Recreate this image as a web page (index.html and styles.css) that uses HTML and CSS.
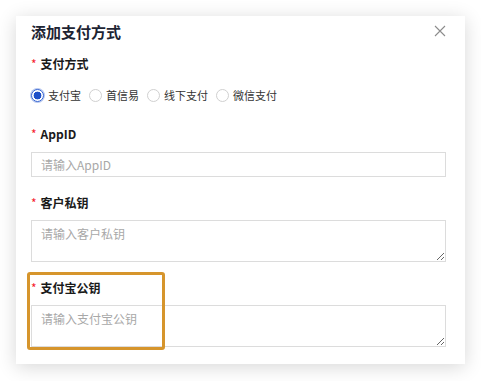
FILE: index.html
```html
<!DOCTYPE html>
<html lang="zh-CN">

<head>
    <meta charset="UTF-8">
    <meta name="viewport" content="width=device-width, initial-scale=1.0">
    <title>添加支付方式</title>
    <link rel="stylesheet" href="styles.css">
</head>

<body>
    <div class="dialog">
        <div class="dialog-header">
            <h2>添加支付方式</h2>
            <span class="close-btn">
                <svg width="12" height="12" viewBox="0 0 12 12">
                    <path d="M1 1 L11 11 M11 1 L1 11" stroke="#8c8c8c" stroke-width="1.1" fill="none" />
                </svg>
            </span>
        </div>

        <div class="form-item">
            <label class="form-label"><span class="required">*</span>支付方式</label>
            <div class="radio-group">
                <label class="radio"><input type="radio" name="pay" checked><span>支付宝</span></label>
                <label class="radio"><input type="radio" name="pay"><span>首信易</span></label>
                <label class="radio"><input type="radio" name="pay"><span>线下支付</span></label>
                <label class="radio"><input type="radio" name="pay"><span>微信支付</span></label>
            </div>
        </div>

        <div class="form-item">
            <label class="form-label"><span class="required">*</span>AppID</label>
            <input class="text-input" type="text" placeholder="请输入AppID">
        </div>

        <div class="form-item">
            <label class="form-label area-label"><span class="required">*</span>客户私钥</label>
            <textarea class="text-area" placeholder="请输入客户私钥"></textarea>
        </div>

        <div class="form-item highlight-item">
            <label class="form-label area-label"><span class="required">*</span>支付宝公钥</label>
            <textarea class="text-area" placeholder="请输入支付宝公钥"></textarea>
            <div class="highlight-box"></div>
        </div>
    </div>
</body>

</html>
```

FILE: styles.css
```css
body {
    margin: 0;
    min-height: 100vh;
    padding-top: 16px;
    box-sizing: border-box;
    background-color: #ffffff;
    font-family: 'Noto Sans CJK SC', 'Noto Sans', sans-serif;
    color: #222;
}

.dialog {
    margin-left: 16px;
    width: 449px;
    height: 348px;
    box-sizing: border-box;
    padding: 6px 19px 18px 15px;
    background-color: #ffffff;
    box-shadow: 0 3px 18px rgba(0, 0, 0, 0.16);
}

.dialog-header {
    display: flex;
    justify-content: space-between;
    align-items: center;
    height: 20px;
}

.dialog-header h2 {
    margin: 0;
    font-size: 15px;
    line-height: 20px;
    font-weight: bold;
    color: #1d2433;
}

.close-btn {
    display: flex;
    margin-top: -3px;
}

.form-item {
    margin-top: 12px;
}

.form-item + .form-item {
    margin-top: 16px;
}

.form-item:nth-child(3) {
    margin-top: 19px;
}

.form-label {
    display: block;
    font-size: 12px;
    line-height: 20px;
    font-weight: bold;
    color: #1a1a1a;
    margin-bottom: 8px;
}

.area-label {
    margin-bottom: 7px;
}

.required {
    color: #f5222d;
    margin-right: 4px;
    font-weight: normal;
}

.radio-group {
    display: flex;
    align-items: center;
    height: 20px;
    margin-top: 11px;
}

.radio {
    display: flex;
    align-items: center;
    font-size: 11px;
    color: #333;
    margin-right: 8px;
}

.radio input {
    appearance: none;
    -webkit-appearance: none;
    width: 13px;
    height: 13px;
    margin: 0 4px 0 0;
    border: 1px solid #d0d0d0;
    border-radius: 50%;
    box-sizing: border-box;
    background-color: #fff;
}

.radio input:checked {
    border: 1px solid #2f5fd0;
    background: radial-gradient(circle, #1d4fc8 0 3.6px, #ffffff 4.2px);
    box-shadow: 0 0 0 1px rgba(47, 95, 208, 0.35);
}

.text-input,
.text-area {
    display: block;
    width: 100%;
    box-sizing: border-box;
    border: 1px solid #dcdcdc;
    border-radius: 0;
    font-family: 'Noto Sans CJK SC', 'Noto Sans', sans-serif;
    font-size: 12px;
    padding: 0 9px;
    outline: none;
}

.text-input {
    height: 25px;
}

.text-area {
    height: 42px;
    padding-top: 4px;
    resize: vertical;
}

.text-input::placeholder,
.text-area::placeholder {
    color: #a8a8a8;
}

.highlight-item {
    position: relative;
}

.highlight-box {
    position: absolute;
    top: -6px;
    left: -4px;
    width: 138px;
    height: 78px;
    box-sizing: border-box;
    border: 3px solid #d6952c;
    border-radius: 3px;
}
```
